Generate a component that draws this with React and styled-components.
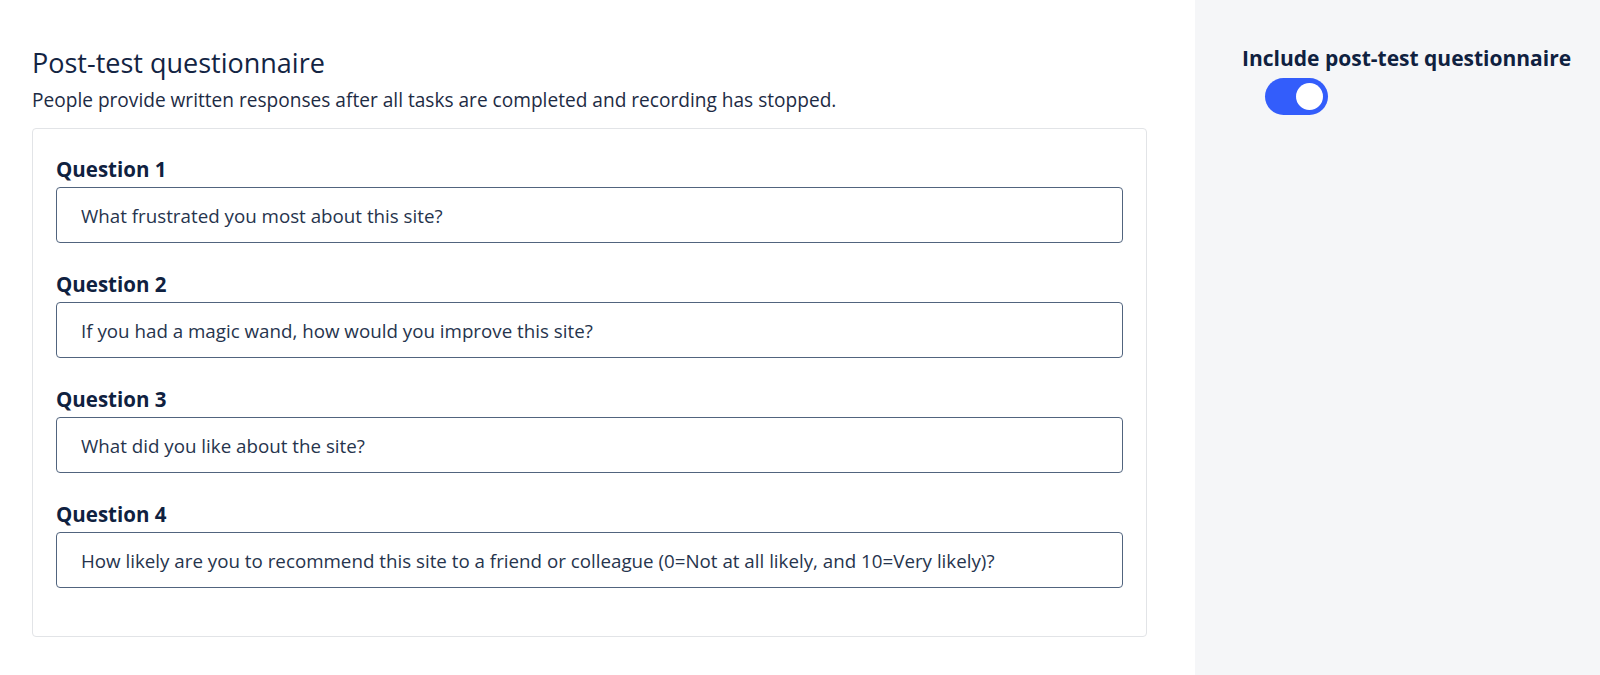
import React from 'react'
import styled, { createGlobalStyle } from 'styled-components'

const GlobalStyle = createGlobalStyle`
    html, body {
        margin: 0;
        padding: 0;
        background: #ffffff;
    }
    body {
        font-family: "Open Sans", "Liberation Sans", sans-serif;
        color: #132443;
    }
`

const Page = styled.div`
    display: flex;
    min-height: 675px;
`

const Main = styled.main`
    flex: 1;
    padding: 47px 48px 0 32px;
`

const Title = styled.h2`
    margin: 0;
    font-size: 27px;
    line-height: 32px;
    font-weight: 400;
    color: #132443;
`

const Subtitle = styled.p`
    margin: 9px 0 16px;
    font-size: 19.1px;
    line-height: 24px;
    color: #1d2b44;
`

const Card = styled.div`
    border: 1px solid #e2e4e7;
    border-radius: 4px;
    padding: 28px 23px 48px;
    display: flex;
    flex-direction: column;
    gap: 29px;
`

const Question = styled.div`
    display: flex;
    flex-direction: column;
    gap: 6px;
`

const Label = styled.label`
    font-size: 20.5px;
    line-height: 24px;
    font-weight: 700;
    color: #0f2140;
`

const Field = styled.input`
    box-sizing: border-box;
    height: 56px;
    width: 100%;
    padding: 0 24px;
    border: 1px solid #51647e;
    border-radius: 4px;
    font-family: inherit;
    font-size: 18.75px;
    color: #26344d;
    background: #fff;
    outline: none;
`

const Aside = styled.aside`
    width: 358px;
    padding: 46px 0 0 47px;
    background: #f5f6f8;
    display: flex;
    flex-direction: column;
    align-items: flex-start;
`

const AsideLabel = styled.span`
    font-size: 21px;
    line-height: 24px;
    font-weight: 700;
    color: #0f2140;
    white-space: nowrap;
`

const Toggle = styled.button`
    position: relative;
    margin: 8px 0 0 23px;
    width: 63px;
    height: 37px;
    padding: 0;
    border: none;
    border-radius: 19px;
    background: ${(p) => (p.on ? '#335dfb' : '#c3c8d0')};
    cursor: pointer;
`

const Knob = styled.span`
    position: absolute;
    top: 5px;
    left: ${(p) => (p.on ? '31px' : '5px')};
    width: 27px;
    height: 27px;
    border-radius: 50%;
    background: #ffffff;
`

const questions = [
    'What frustrated you most about this site?',
    'If you had a magic wand, how would you improve this site?',
    'What did you like about the site?',
    'How likely are you to recommend this site to a friend or colleague (0=Not at all likely, and 10=Very likely)?',
]

class App extends React.Component {
    state = {
        enabled: true,
    }

    render() {
        return (
            <Page>
                <GlobalStyle />
                <Main>
                    <Title>Post-test questionnaire</Title>
                    <Subtitle>People provide written responses after all tasks are completed and recording has stopped.</Subtitle>
                    <Card>
                        {questions.map((q, i) => (
                            <Question key={i}>
                                <Label>Question {i + 1}</Label>
                                <Field type={'text'} value={q} readOnly />
                            </Question>
                        ))}
                    </Card>
                </Main>
                <Aside>
                    <AsideLabel>Include post-test questionnaire</AsideLabel>
                    <Toggle
                        on={this.state.enabled ? 1 : 0}
                        onClick={() => this.setState({ enabled: !this.state.enabled })}
                    >
                        <Knob on={this.state.enabled ? 1 : 0} />
                    </Toggle>
                </Aside>
            </Page>
        )
    }
}

export default App
